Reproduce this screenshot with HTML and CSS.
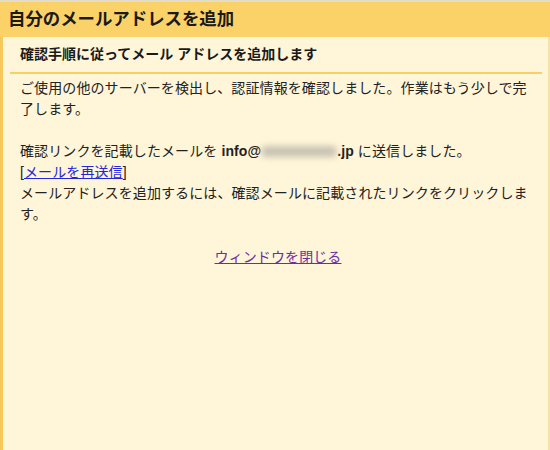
FILE: index.html
```html
<!DOCTYPE html>
<html lang="ja">
<head>
<meta charset="utf-8">
<title>自分のメールアドレスを追加</title>
<link rel="stylesheet" href="styles.css">
</head>
<body>
<div class="page">
  <div class="topline"></div>
  <div class="header">自分のメールアドレスを追加</div>
  <div class="panel">
    <div class="subhead">確認手順に従ってメール アドレスを追加します</div>
    <div class="content">
      <p class="para">ご使用の他のサーバーを検出し、認証情報を確認しました。作業はもう少しで完了します。</p>
      <p class="para">確認リンクを記載したメールを <b>info@<span class="blur"></span>.jp</b> に送信しました。<br>[<a class="link" href="#">メールを再送信</a>]<br>メールアドレスを追加するには、確認メールに記載されたリンクをクリックします。</p>
      <div class="close"><a class="visited" href="#">ウィンドウを閉じる</a></div>
    </div>
  </div>
</div>
</body>
</html>
```
FILE: styles.css
```css
html, body {
  margin: 0;
  padding: 0;
}
body {
  font-family: "Liberation Sans", "Noto Sans CJK JP", sans-serif;
  color: #222;
  background: #fff5d9;
}
.page {
  width: 550px;
  height: 450px;
  display: flex;
  flex-direction: column;
}
.topline {
  height: 2px;
  background: #e2dccb;
}
.header {
  height: 35px;
  line-height: 35px;
  padding-left: 8px;
  background: #fad267;
  font-size: 17.4px;
  font-weight: bold;
  color: #1a1a1a;
}
.panel {
  flex: 1;
  background: #fff5d9;
  border-left: 3px solid #f7c85c;
  border-right: 2px solid #f3e3a8;
  padding: 0 6px 0 7px;
}
.subhead {
  padding: 7px 10px 7px 10px;
  font-size: 14px;
  font-weight: bold;
  line-height: 21px;
  border-bottom: 2px solid #f7cf62;
  color: #1a1a1a;
}
.content {
  padding: 4px 6px 0 10px;
  font-size: 14px;
  line-height: 21px;
  letter-spacing: 0.1px;
}
.para {
  margin: 0 0 21px 0;
}
.para:last-of-type {
  margin-bottom: 0;
}
.blur {
  display: inline-block;
  width: 76px;
  height: 11px;
  background: #c8c2b2;
  border-radius: 6px;
  filter: blur(3px);
  vertical-align: -1px;
}
.link {
  color: #2525dd;
}
.close {
  margin-top: 22px;
  text-align: center;
}
.visited {
  color: #6b2fa3;
}
```
